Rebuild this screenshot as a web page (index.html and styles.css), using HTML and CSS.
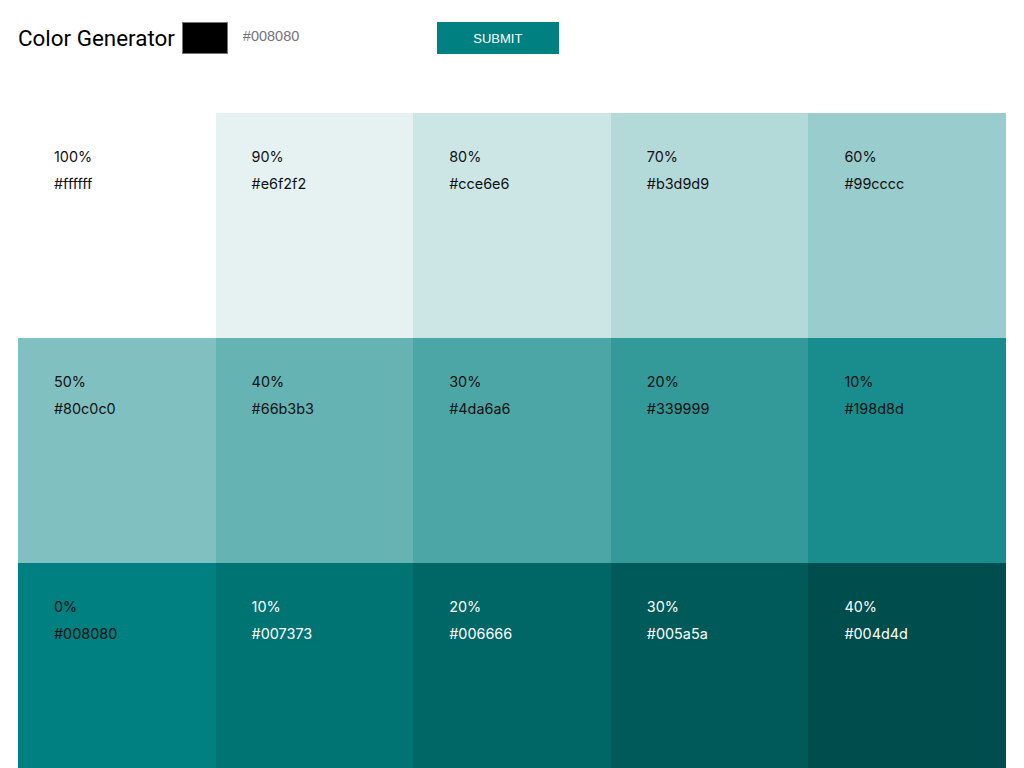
FILE: index.html
```html
<!DOCTYPE html>
<html>
<head>
<meta charset="utf-8">
<link rel="stylesheet" href="styles.css">
</head>
<body>
<header class="bar">
  <h1 class="title">Color Generator</h1>
  <span class="swatch"></span>
  <input class="hex" type="text" placeholder="#008080">
  <button class="submit">SUBMIT</button>
</header>
<main class="grid">
  <div class="tile" style="background:#ffffff"><p>100%</p><p>#ffffff</p></div>
  <div class="tile" style="background:#e6f2f2"><p>90%</p><p>#e6f2f2</p></div>
  <div class="tile" style="background:#cce6e6"><p>80%</p><p>#cce6e6</p></div>
  <div class="tile" style="background:#b3d9d9"><p>70%</p><p>#b3d9d9</p></div>
  <div class="tile" style="background:#99cccc"><p>60%</p><p>#99cccc</p></div>
  <div class="tile" style="background:#80c0c0"><p>50%</p><p>#80c0c0</p></div>
  <div class="tile" style="background:#66b3b3"><p>40%</p><p>#66b3b3</p></div>
  <div class="tile" style="background:#4da6a6"><p>30%</p><p>#4da6a6</p></div>
  <div class="tile" style="background:#339999"><p>20%</p><p>#339999</p></div>
  <div class="tile" style="background:#198d8d"><p>10%</p><p>#198d8d</p></div>
  <div class="tile" style="background:#008080"><p>0%</p><p>#008080</p></div>
  <div class="tile dark" style="background:#007373"><p>10%</p><p>#007373</p></div>
  <div class="tile dark" style="background:#006666"><p>20%</p><p>#006666</p></div>
  <div class="tile dark" style="background:#005a5a"><p>30%</p><p>#005a5a</p></div>
  <div class="tile dark" style="background:#004d4d"><p>40%</p><p>#004d4d</p></div>
</main>
</body>
</html>
```
FILE: styles.css
```css
* { box-sizing: border-box; }
html, body { margin: 0; padding: 0; background: #fff; }
body { padding: 22px 18px 0; font-family: "Liberation Sans", Arial, sans-serif; }
.bar { display: flex; align-items: center; height: 32px; }
.title { margin: 0; font-family: Roboto, "Liberation Sans", sans-serif; font-weight: 400; font-size: 22.4px; color: #000; }
.swatch { display: block; width: 46px; height: 32px; background: #000; border: 1px solid #767676; margin-left: 7px; }
.hex { border: none; outline: none; width: 180px; height: 32px; margin-left: 15px; padding: 0; font-family: "Liberation Sans", Arial, sans-serif; font-size: 14.5px; color: #333; background: transparent; position: relative; top: -2px; }
.hex::placeholder { color: #757575; }
.submit { width: 122px; height: 32px; margin-left: 14px; border: none; background: #008080; color: #fff; font-family: "Liberation Sans", Arial, sans-serif; font-size: 13px; padding: 0; }
.grid { margin-top: 59px; display: grid; grid-template-columns: repeat(5, 1fr); grid-auto-rows: 225px; }
.tile { padding: 31px 36px 0; font-family: Inter, sans-serif; font-size: 14.4px; color: #111; }
.tile p { margin: 0; line-height: 26.5px; }
.tile.dark { color: #fff; }
```
